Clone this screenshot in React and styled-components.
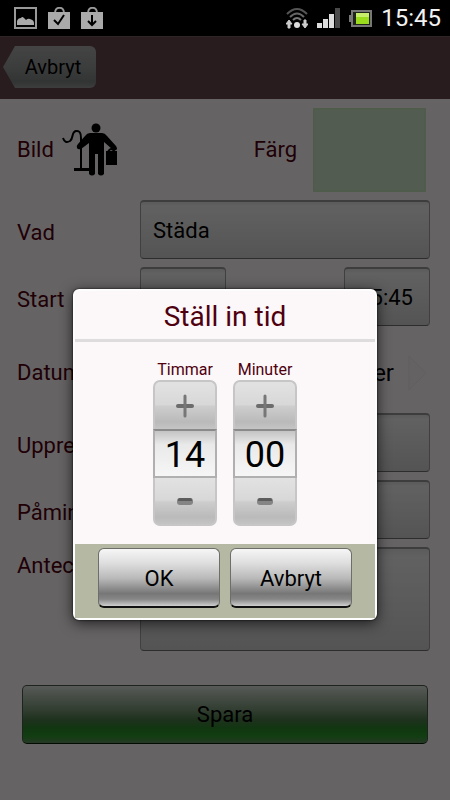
import { useState } from "react";
import styled, { createGlobalStyle } from "styled-components";

const GlobalStyle = createGlobalStyle`
  * {
    box-sizing: border-box;
  }

  body {
    margin: 0;
    background: #000;
    font-family: Roboto, "Open Sans", sans-serif;
  }

  button, input, textarea {
    font-family: inherit;
    margin: 0;
  }
`;

const Screen = styled.div`
  display: flex;
  flex-direction: column;
  min-height: 100vh;
`;

const StatusBar = styled.div`
  display: flex;
  align-items: center;
  justify-content: space-between;
  height: 36px;
  padding: 0 9px 0 14px;
  background: #000;
`;

const StatusGroup = styled.div`
  display: flex;
  align-items: center;
  gap: ${({ $gap }) => $gap}px;
`;

const Clock = styled.span`
  color: #f2f2f2;
  font-size: 24px;
  line-height: 36px;
`;

const Page = styled.div`
  position: relative;
  display: flex;
  flex: 1;
  flex-direction: column;
  background: #fff8fa;
`;

const Header = styled.header`
  display: flex;
  align-items: center;
  height: 63px;
  padding: 0 3px 2px;
  background: #64464b;
  border-top: 1px solid #775a5f;
`;

const BackButton = styled.button`
  height: 42px;
  width: 93px;
  padding: 0 0 0 7px;
  border: 0;
  border-radius: 0 6px 6px 0;
  background: linear-gradient(#aaa, #969898 50%, #7c8482 85%, #989898);
  clip-path: polygon(12px 0, 100% 0, 100% 100%, 12px 100%, 0 50%);
  font-size: 20px;
  color: #000;
`;

const Form = styled.form`
  display: flex;
  flex-direction: column;
  gap: 8px;
  padding: 8px 20px 56px 17px;
`;

const Row = styled.div`
  display: flex;
  align-items: ${({ $top }) => ($top ? "flex-start" : "center")};
  min-height: ${({ $height }) => $height || 59}px;
`;

const Label = styled.label`
  flex: none;
  width: ${({ $auto }) => ($auto ? "auto" : "123px")};
  padding-top: ${({ $auto }) => ($auto ? 0 : 6)}px;
  font-size: 22px;
  line-height: 26px;
  color: #4f0010;
`;

const ImageButton = styled.button`
  padding: 0;
  margin-left: 8px;
  border: 0;
  background: none;
  line-height: 0;
`;

const ColorBox = styled.button`
  width: 113px;
  height: 84px;
  margin: 0 4px 0 16px;
  border: 2px solid #c6e6be;
  background: #cfe6c9;
`;

const Spacer = styled.span`
  flex: 1;
`;

const fieldLook = `
  border: 1px solid #a0a0a0;
  border-top: 2px solid #989898;
  border-bottom: 1px solid #707070;
  border-radius: 4px;
  background: linear-gradient(#e4e4e4, #f2f2f2 8%, #d2d2d2);
  font-size: 22px;
  color: #000;
`;

const Field = styled.input`
  ${fieldLook}
  flex: ${({ $short }) => ($short ? "none" : 1)};
  width: ${({ $short }) => ($short ? "86px" : "auto")};
  min-width: 0;
  height: 59px;
  padding: 0 ${({ $short }) => ($short ? 16 : 12)}px 0 12px;
  text-align: ${({ $short }) => ($short ? "right" : "left")};
`;

const Notes = styled.textarea`
  ${fieldLook}
  flex: 1;
  min-width: 0;
  height: 104px;
  padding: 12px;
  resize: none;
`;

const DateButton = styled.button`
  display: flex;
  flex: 1;
  align-items: center;
  justify-content: flex-end;
  gap: 14px;
  padding: 6px 3px 0 0;
  border: 0;
  background: none;
  font-size: 24px;
  color: #000;
`;

const SaveButton = styled.button`
  height: 59px;
  margin: 26px 2px 0 5px;
  border: 1px solid #4a5a4a;
  border-bottom-color: #062006;
  border-radius: 5px;
  background: linear-gradient(#dde2dd, #b0c0ae 18%, #7b9a79 42%, #4a7b48 60%, #2b8a2b 75%, #2d982d 88%, #5f8f5f);
  font-size: 22px;
  color: #000;
`;

const Overlay = styled.div`
  position: absolute;
  inset: 0;
  display: flex;
  align-items: center;
  justify-content: center;
  padding-top: 73px;
  background: rgba(0, 0, 0, 0.6);
`;

const Dialog = styled.section`
  width: 304px;
  border: 2px solid #fdfdfd;
  border-radius: 6px;
  background: #fcf8f9;
  box-shadow: 0 0 2px #000, 0 3px 14px rgba(0, 0, 0, 0.7);
`;

const DialogTitle = styled.h2`
  margin: 0;
  padding: 4px 0 0;
  border-bottom: 3px solid #dedcdd;
  font-size: 28px;
  font-weight: 400;
  line-height: 44px;
  text-align: center;
  color: #4f0010;
`;

const Pickers = styled.div`
  display: flex;
  justify-content: center;
  gap: 16px;
  padding: 18px 0;
`;

const Picker = styled.div`
  display: flex;
  flex-direction: column;
  align-items: center;
  width: 64px;
`;

const PickerLabel = styled.label`
  font-size: 16px;
  line-height: 20px;
  color: #4f0010;
`;

const StepButton = styled.button`
  display: flex;
  align-items: center;
  justify-content: center;
  width: 100%;
  height: ${({ $down }) => ($down ? 48 : 49)}px;
  padding: 0;
  border: 2px solid #c6c6c6;
  border-radius: ${({ $down }) => ($down ? "0 0 7px 7px" : "7px 7px 0 0")};
  border-${({ $down }) => ($down ? "top" : "bottom")}: 0;
  background: linear-gradient(#e2e2e2, #d8d8d8 48%, #cdcdcd 52%, #bababa 85%, #c4c4c4);
`;

const PickerValue = styled.input`
  width: 100%;
  height: 49px;
  padding: 3px 0 0;
  border: 2px solid #b0b0b0;
  border-top-color: #8a8a8a;
  background: linear-gradient(#c4c4c4, #e9e9e9 30%, #f6f6f6);
  font-size: 36px;
  text-align: center;
  color: #000;
`;

const DialogFooter = styled.div`
  display: flex;
  justify-content: center;
  gap: 10px;
  padding: 4px 0 10px;
  background: #b5b8a3;
`;

const DialogButton = styled.button`
  width: 122px;
  height: 60px;
  padding: 2px 0 0;
  border: 1px solid #6e6e68;
  border-bottom: 2px solid #111;
  border-radius: 6px;
  background: linear-gradient(#f6f6f6, #dedede 25%, #b8b8b8 52%, #777 78%, #868686 88%, #cfcfcf);
  font-size: 22px;
  color: #000;
`;

const PictureIcon = () => (
  <svg width="23" height="22" viewBox="0 0 23 22" aria-hidden="true">
    <rect x="1" y="1" width="21" height="20" fill="none" stroke="#999" strokeWidth="2" />
    <path d="M3 18v-4q1-3 4-3q1-2 3 0l2 2q2-2 4-1q4 1 4 4v2z" fill="#aaa" />
  </svg>
);

const BagIcon = ({ children }) => (
  <svg width="22" height="22" viewBox="0 0 22 22" aria-hidden="true">
    <path d="M7 6C7 -1 16 -1 16 6" fill="none" stroke="#999" strokeWidth="2" />
    <path d="M0 5h22v17H0z" fill="#aaa" />
    {children}
  </svg>
);

const WifiIcon = () => (
  <svg width="22" height="22" viewBox="0 0 22 22" aria-hidden="true">
    <g fill="none" stroke="#555" strokeWidth="2">
      <path d="M1 7Q11-3 21 7" />
      <path d="M4 10Q11 3 18 10" stroke="#666" />
      <path d="M7 13Q11 9 15 13" stroke="#777" />
    </g>
    <circle cx="11" cy="18" r="3" fill="#ddd" />
    <path d="M3 13l3 4H4v4H2v-4H0zM19 21l-3-4h2v-4h2v4h2z" fill="#ccc" stroke="#ccc" />
  </svg>
);

const SignalIcon = () => (
  <svg width="23" height="20" viewBox="0 0 23 20" aria-hidden="true">
    <path d="M0 15h5v5H0zM6 11h5v9H6zM12 6h5v14h-5z" fill="#ddd" />
    <path d="M18 0h5v20h-5z" fill="#4a4a4a" />
  </svg>
);

const BatteryIcon = () => (
  <svg width="23" height="17" viewBox="0 0 23 17" aria-hidden="true">
    <path d="M0 5h3v7H0z" fill="#777" />
    <rect x="3" y="1" width="19" height="15" fill="#20241a" stroke="#777" strokeWidth="2" />
    <path d="M7 3h13v11H7z" fill="#9bdc1c" />
    <path d="M7 3h13v4H7z" fill="#c6ee6a" />
  </svg>
);

const CleanerIcon = () => (
  <svg width="56" height="54" viewBox="0 0 56 54" aria-hidden="true">
    <circle cx="34" cy="5" r="4.5" />
    <path d="M28 10h12q3 0 5 3l9 10q2 3 0 4t-4-1l-8-7v32q-3 3-6 0V31h-3v20q-3 3-6 0V20l-8 6q-3 1-4-1t1-4l7-8q2-3 5-3z" />
    <path d="M1 15q2 6 7 3c4-3 1-9 6-10q5-1 5 7v31" fill="none" stroke="#000" strokeWidth="2" />
    <path d="M12 45h15v3H12zM44 28h11v14H44z" />
    <path d="M46 29q3-6 7 0" fill="none" stroke="#000" strokeWidth="2" />
  </svg>
);

const ArrowIcon = () => (
  <svg width="19" height="36" viewBox="0 0 19 36" aria-hidden="true">
    <path d="M1 1l17 17L1 35z" fill="#fbf4f6" stroke="#efeaeb" />
  </svg>
);

const StepIcon = ({ down }) => (
  <svg width="18" height="24" viewBox="0 0 18 24" aria-hidden="true">
    {down ? (
      <>
        <rect x="1" y="9" width="16" height="7" rx="3" fill="#858585" />
        <path d="M2 11q0-2 2-2h10q2 0 2 2v1H2z" fill="#5c5c5c" />
      </>
    ) : (
      <>
        <path d="M2 12h14" stroke="#6c6c6c" strokeWidth="4" strokeLinecap="round" />
        <path d="M9 2v20" stroke="#777" strokeWidth="3" strokeLinecap="round" />
      </>
    )}
  </svg>
);

const pad = (value) => String(value).padStart(2, "0");

const NumberPicker = ({ id, label, value, max, onChange }) => {
  const step = (diff) => onChange((value + diff + max) % max);

  return (
    <Picker>
      <PickerLabel htmlFor={id}>{label}</PickerLabel>
      <StepButton type="button" aria-label={`Öka ${label}`} onClick={() => step(1)}>
        <StepIcon />
      </StepButton>
      <PickerValue
        id={id}
        inputMode="numeric"
        value={pad(value)}
        onChange={(e) => onChange((Number(e.target.value) || 0) % max)}
      />
      <StepButton type="button" $down aria-label={`Minska ${label}`} onClick={() => step(-1)}>
        <StepIcon down />
      </StepButton>
    </Picker>
  );
};

const TimeDialog = ({ onConfirm, onCancel }) => {
  const [hours, setHours] = useState(14);
  const [minutes, setMinutes] = useState(0);

  return (
    <Overlay>
      <Dialog role="dialog" aria-labelledby="dialog-title">
        <DialogTitle id="dialog-title">Ställ in tid</DialogTitle>
        <Pickers>
          <NumberPicker id="hours" label="Timmar" value={hours} max={24} onChange={setHours} />
          <NumberPicker id="minutes" label="Minuter" value={minutes} max={60} onChange={setMinutes} />
        </Pickers>
        <DialogFooter>
          <DialogButton type="button" onClick={() => onConfirm(`${pad(hours)}:${pad(minutes)}`)}>
            OK
          </DialogButton>
          <DialogButton type="button" onClick={onCancel}>
            Avbryt
          </DialogButton>
        </DialogFooter>
      </Dialog>
    </Overlay>
  );
};

const App = () => {
  const [open, setOpen] = useState(true);
  const [start, setStart] = useState("");

  const confirmTime = (time) => {
    setStart(time);
    setOpen(false);
  };

  return (
    <Screen>
      <GlobalStyle />
      <StatusBar>
        <StatusGroup $gap={11}>
          <PictureIcon />
          <BagIcon>
            <path d="M6 13l4 4 6-9" fill="none" stroke="#000" strokeWidth="2" />
          </BagIcon>
          <BagIcon>
            <path d="M11 8v10M7 14l4 4 4-4" fill="none" stroke="#000" strokeWidth="2" />
          </BagIcon>
        </StatusGroup>
        <StatusGroup $gap={9}>
          <WifiIcon />
          <SignalIcon />
          <BatteryIcon />
          <Clock>15:45</Clock>
        </StatusGroup>
      </StatusBar>
      <Page>
        <Header>
          <BackButton type="button">Avbryt</BackButton>
        </Header>
        <Form onSubmit={(e) => e.preventDefault()}>
          <Row $height={85}>
            <Label as="span" $auto>Bild</Label>
            <ImageButton type="button" aria-label="Välj bild">
              <CleanerIcon />
            </ImageButton>
            <Spacer />
            <Label $auto htmlFor="color">Färg</Label>
            <ColorBox id="color" type="button" />
          </Row>
          <Row>
            <Label htmlFor="what">Vad</Label>
            <Field id="what" defaultValue="Städa" />
          </Row>
          <Row>
            <Label htmlFor="start">Start</Label>
            <Field $short id="start" value={start} readOnly onClick={() => setOpen(true)} />
            <Spacer />
            <Field $short aria-label="Slut" defaultValue="15:45" />
          </Row>
          <Row $height={71}>
            <Label htmlFor="date">Datum</Label>
            <DateButton id="date" type="button">
              december
              <ArrowIcon />
            </DateButton>
          </Row>
          <Row>
            <Label htmlFor="repeat">Upprepa</Label>
            <Field id="repeat" />
          </Row>
          <Row>
            <Label htmlFor="reminder">Påminn</Label>
            <Field id="reminder" />
          </Row>
          <Row $top>
            <Label htmlFor="notes">Anteckning</Label>
            <Notes id="notes" />
          </Row>
          <SaveButton type="submit">Spara</SaveButton>
        </Form>
        {open && <TimeDialog onConfirm={confirmTime} onCancel={() => setOpen(false)} />}
      </Page>
    </Screen>
  );
};

export default App;
